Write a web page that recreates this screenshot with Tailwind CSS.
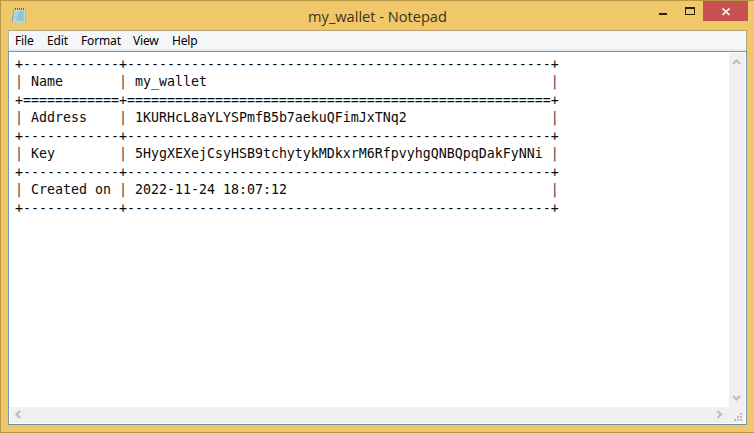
<!DOCTYPE html>
<html lang="en">
<head>
<meta charset="utf-8">
<title>my_wallet - Notepad</title>
<script src="https://cdn.jsdelivr.net/npm/@tailwindcss/browser@4"></script>
</head>
<body class="overflow-hidden">
<div class="relative flex flex-col w-[754px] h-[433px] bg-[#f0c869] border border-r-0 border-[#b99748] pl-[7px] pr-[7px] pb-[7px] font-['Open_Sans',sans-serif]">
  <header class="flex h-[29px] shrink-0 items-start justify-between -mr-px">
    <svg class="ml-[3px] mt-[6px]" width="17" height="17" viewBox="0 0 17 17">
      <path d="M3 2h12v13.500H2L0.700 14.500z" fill="#6d8c82"/>
      <path d="M3.500 2H14v12.500H1.500z" fill="#b2dde2"/>
      <path d="M8 4h6v10H5z" fill="#8fc9d3"/>
      <path d="M14 2v13H2" fill="none" stroke="#e8eee2" stroke-width="1"/>
      <path d="M4 5.500h8M4 7.500h8M3.500 9.500h8M3 11.500h8" stroke="#8fbfc8" stroke-width=".6"/>
      <path d="M4.500 1v2M6.500 1v2M8.500 1v2M10.500 1v2M12.500 1v2" stroke="#57665a" stroke-width="1"/>
    </svg>
    <div class="flex">
      <svg width="82" height="20" viewBox="0 0 82 20" shape-rendering="crispEdges">
        <rect x="38" y="12" width="8" height="2" fill="#2b2312"/>
        <path d="M64 6h10v8H64zM65 8v5h8V8z" fill="#2b2312" fill-rule="evenodd"/>
      </svg>
      <div class="w-[45px] h-[20px] bg-[#c75050]">
        <svg width="45" height="20" viewBox="0 0 45 20"><path d="M19.500 7.500l7 6.500M26.500 7.500l-7 6.500" stroke="#fff" stroke-width="1.700"/></svg>
      </div>
    </div>
  </header>
  <div class="absolute left-0 right-0 top-[5px] text-center text-[14.600px] leading-[20px] text-[#3d331a] pointer-events-none">my_wallet - Notepad</div>
  <nav class="flex h-[21px] shrink-0 bg-[#f5f6f7] border-t border-l border-t-[#b9a572] border-l-[#b9b49a] border-r border-r-[#b9a572] text-[12px] tracking-[-0.150px] leading-[19px] text-black font-['Noto_Sans','Open_Sans',sans-serif] shadow-[inset_0_-2px_0_#e3edf2]">
    <span class="ml-[6px] w-[32px]">File</span><span class="w-[34px]">Edit</span><span class="w-[52px]">Format</span><span class="w-[39px]">View</span><span>Help</span>
  </nav>
  <main class="flex-1 min-h-0 flex flex-col border border-[#7098b4] border-b-[#71929d] bg-white p-px">
    <div class="flex flex-1 min-h-0">
      <pre class="flex-1 pl-[5px] pt-[2px] font-['DejaVu_Sans_Mono',monospace] text-[13.290px] leading-[18px] text-[#0a0a0a] overflow-hidden"><span class="relative top-px">+------------+-----------------------------------------------------+</span>
<i class="not-italic text-[#444]">|</i> Name       <i class="not-italic text-[#444]">|</i> my_wallet                                           <i class="not-italic text-[#444]">|</i>
<span class="relative top-px">+============+=====================================================+</span>
<i class="not-italic text-[#444]">|</i> Address    <i class="not-italic text-[#444]">|</i> 1KURHcL8aYLYSPmfB5b7aekuQFimJxTNq2                  <i class="not-italic text-[#444]">|</i>
<span class="relative top-px">+------------+-----------------------------------------------------+</span>
<i class="not-italic text-[#444]">|</i> Key        <i class="not-italic text-[#444]">|</i> 5HygXEXejCsyHSB9tchytykMDkxrM6RfpvyhgQNBQpqDakFyNNi <i class="not-italic text-[#444]">|</i>
<span class="relative top-px">+------------+-----------------------------------------------------+</span>
<i class="not-italic text-[#444]">|</i> Created on <i class="not-italic text-[#444]">|</i> 2022-11-24 18:07:12                                 <i class="not-italic text-[#444]">|</i>
<span class="relative top-px">+------------+-----------------------------------------------------+</span></pre>
      <div class="w-[16px] bg-[#f0f0f0] flex flex-col justify-between items-center">
        <svg width="16" height="16" viewBox="0 0 16 16"><path d="M4 11l3.500-3.500L11 11" fill="none" stroke="#bdbdbd" stroke-width="2.200"/></svg>
        <svg width="16" height="16" viewBox="0 0 16 16"><path d="M4 5L7.500 8.500 11 5" fill="none" stroke="#bdbdbd" stroke-width="2.200"/></svg>
      </div>
    </div>
    <div class="h-[16px] shrink-0 bg-[#f0f0f0] flex justify-between">
      <svg width="16" height="16" viewBox="0 0 16 16"><path d="M10 4L6.500 7.500 10 11" fill="none" stroke="#bdbdbd" stroke-width="2.200"/></svg>
      <div class="flex">
        <svg width="16" height="16" viewBox="0 0 16 16"><path d="M4.500 4L8 7.500 4.500 11" fill="none" stroke="#bdbdbd" stroke-width="2.200"/></svg>
        <svg width="16" height="16" viewBox="0 0 16 16" fill="#bdbdbd" shape-rendering="crispEdges"><path d="M11 6h2v2h-2zM8 9h2v2H8zM11 9h2v2h-2zM5 12h2v2H5zM8 12h2v2H8zM11 12h2v2h-2z"/></svg>
      </div>
    </div>
  </main>
</div>
</body>
</html>
